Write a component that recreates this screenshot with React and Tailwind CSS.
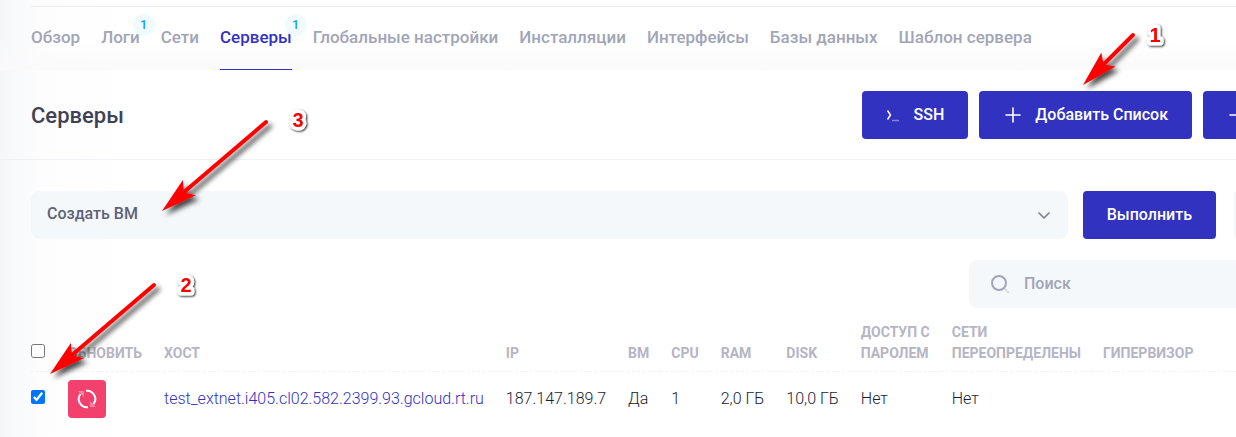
import React, { useState } from 'react';

const tabs = [
  { title: 'Обзор' },
  { title: 'Логи', count: 1 },
  { title: 'Сети' },
  { title: 'Серверы', count: 1, active: true },
  { title: 'Глобальные настройки' },
  { title: 'Инсталляции' },
  { title: 'Интерфейсы' },
  { title: 'Базы данных' },
  { title: 'Шаблон сервера' },
];

const servers = [
  {
    id: 1,
    host: 'test_extnet.i405.cl02.582.2399.93.gcloud.rt.ru',
    ip: '187.147.189.7',
    vm: 'Да',
    cpu: '1',
    ram: '2,0 ГБ',
    disk: '10,0 ГБ',
    password: 'Нет',
    networks: 'Нет',
    hypervisor: '',
  },
];

const marks = [
  { label: '1', x: 1155, y: 42, from: [1133, 35], to: [1083, 85] },
  { label: '2', x: 186, y: 292, from: [154, 285], to: [50, 374] },
  { label: '3', x: 298, y: 127, from: [266, 122], to: [162, 211] },
];

const PlusIcon = () => (
  <svg className="size-5 shrink-0" viewBox="0 0 20 20" stroke="currentColor" strokeWidth="1.6" strokeLinecap="round">
    <path d="M3 10H17M10 3V17" />
  </svg>
);

const Tabs = () => (
  <nav className="flex gap-[21px] border-t border-[#ebedf3] text-[17px]">
    {tabs.map((tab) => (
      <a
        key={tab.title}
        href="#"
        className={
          tab.active
            ? 'relative border-b border-[#3232c0] pt-[18px] pb-5 leading-6 font-medium text-[#3232c0]'
            : 'relative border-b border-transparent pt-[18px] pb-5 leading-6 font-medium text-[#a1a5b7]'
        }
      >
        {tab.title}
        {tab.count && (
          <span className="absolute top-[7px] -right-[15px] size-[22px] rounded-full bg-[#f1faff] text-center text-xs leading-[22px] text-[#009ef7]">
            {tab.count}
          </span>
        )}
      </a>
    ))}
  </nav>
);

const Toolbar = () => (
  <div className="flex items-center border-b border-[#eff2f5] pt-[21px] pb-5 pl-[31px]">
    <h1 className="flex-1 pt-0.5 text-[22px] leading-8 font-medium text-[#3f4254]">Серверы</h1>
    <div className="-mr-[95px] flex shrink-0 gap-[11px]">
      <button className="flex h-12 items-center gap-3 rounded bg-[#3232c0] px-6 font-medium text-white">
        <svg className="size-4" viewBox="0 0 16 16" fill="none" stroke="currentColor" strokeWidth="1.5">
          <path d="M1.5 3.5L4.5 8L1.5 12.5" />
          <path d="M6 13.5H13" opacity="0.4" />
        </svg>
        SSH
      </button>
      <button className="flex h-12 items-center gap-3 rounded bg-[#3232c0] px-6 font-medium text-white">
        <PlusIcon />
        Добавить Список
      </button>
      <button aria-label="Добавить" className="flex h-12 w-32 items-center rounded bg-[#3232c0] px-6 text-white">
        <PlusIcon />
      </button>
    </div>
  </div>
);

const Actions = () => (
  <div className="flex pt-[31px] pl-[31px]">
    <div className="relative flex-1">
      <select
        aria-label="Действие"
        className="h-12 w-full appearance-none rounded-lg bg-[#f5f8fa] px-4 pb-0.5 font-medium text-[#5e6278]"
      >
        <option>Создать ВМ</option>
      </select>
      <svg
        className="pointer-events-none absolute top-4 right-4 size-4"
        viewBox="0 0 16 16"
        fill="none"
        stroke="#7e8299"
        strokeWidth="1.7"
        strokeLinecap="round"
        strokeLinejoin="round"
      >
        <path d="M3 6L8 11L13 6" />
      </svg>
    </div>
    <button className="ml-[15px] h-12 rounded bg-[#3232c0] px-6 font-medium text-white">Выполнить</button>
    <div className="-mr-6 ml-[18px] h-12 w-[26px] rounded bg-[#f5f8fa]" />
  </div>
);

const Search = () => (
  <div className="mt-[21px] flex justify-end">
    <label className="flex h-12 w-[267px] items-center gap-3.5 rounded-l-lg bg-[#f5f8fa] pl-[21px]">
      <svg className="size-5 shrink-0" viewBox="0 0 20 20" fill="none" stroke="#a1a5b7" strokeWidth="2">
        <circle cx="9" cy="9" r="7" />
        <path d="M14 14L19 19" opacity="0.3" />
      </svg>
      <input
        type="text"
        aria-label="Поиск"
        placeholder="Поиск"
        className="w-full min-w-0 bg-transparent font-medium outline-none placeholder:text-[#a1a5b7]"
      />
    </label>
  </div>
);

const ServerTable = () => {
  const [selected, setSelected] = useState([1]);

  const toggle = (id) => {
    setSelected(selected.includes(id) ? selected.filter((item) => item !== id) : [...selected, id]);
  };

  const toggleAll = (e) => {
    setSelected(e.target.checked ? servers.map((server) => server.id) : []);
  };

  return (
    <div className="pt-3.5 pl-[31px]">
      <table className="w-full text-left whitespace-nowrap">
        <thead>
          <tr className="align-bottom text-sm leading-[21px] font-medium text-[#b5b5c3] uppercase [&>th]:border-b [&>th]:border-dashed [&>th]:border-[#eff2f5] [&>th]:pb-[7px]">
            <th className="pr-3">
              <input type="checkbox" aria-label="Выбрать все" className="mb-1.5 block size-[14px]" onChange={toggleAll} />
            </th>
            <th className="px-[11px]">Обновить</th>
            <th className="px-[11px]">Хост</th>
            <th className="px-[11px]">IP</th>
            <th className="px-[11px]">ВМ</th>
            <th className="px-[11px]">CPU</th>
            <th className="px-[11px]">RAM</th>
            <th className="px-[11px]">Disk</th>
            <th className="px-[11px]">Доступ с<br />паролем</th>
            <th className="px-[11px]">Сети<br />переопределены</th>
            <th className="w-full px-[11px]">Гипервизор</th>
          </tr>
        </thead>
        <tbody>
          {servers.map((server) => (
            <tr key={server.id} className="font-light text-[#181c32] [&>td]:py-2">
              <td className="pr-3">
                <input
                  type="checkbox"
                  aria-label={server.host}
                  className="mb-1 block size-[14px]"
                  checked={selected.includes(server.id)}
                  onChange={() => toggle(server.id)}
                />
              </td>
              <td className="px-[11px]">
                <button aria-label="Обновить" className="flex size-[38px] items-center justify-center rounded bg-[#f1416c] text-white">
                  <svg className="size-5" viewBox="0 0 20 20" fill="none" stroke="currentColor" strokeWidth="2">
                    <path d="M9 1.8A8.2 8.2 0 0 1 16.5 15M11 18.2A8.2 8.2 0 0 1 3.5 5" />
                    <path d="M1 2H7V8ZM19 18H13V12Z" fill="currentColor" stroke="none" opacity="0.35" />
                  </svg>
                </button>
              </td>
              <td className="px-[11px]">
                <a href="#" className="text-[#3232c0]">{server.host}</a>
              </td>
              <td className="px-[11px]">{server.ip}</td>
              <td className="px-[11px]">{server.vm}</td>
              <td className="px-[11px]">{server.cpu}</td>
              <td className="px-[11px]">{server.ram}</td>
              <td className="px-[11px]">{server.disk}</td>
              <td className="px-[11px]">{server.password}</td>
              <td className="px-[11px]">{server.networks}</td>
              <td className="px-[11px]">{server.hypervisor}</td>
            </tr>
          ))}
        </tbody>
      </table>
    </div>
  );
};

// numbered arrows over the page
const Annotations = () => (
  <svg className="pointer-events-none absolute top-0 left-0 h-[437px] w-[1236px]" viewBox="0 0 1236 437">
    <defs>
      <filter id="shadow" x="-20%" y="-20%" width="150%" height="150%">
        <feDropShadow dx="4" dy="4" stdDeviation="2.5" floodColor="#000" floodOpacity="0.7" />
      </filter>
      <filter id="label-shadow" x="-80%" y="-50%" width="260%" height="200%">
        <feDropShadow dx="1" dy="1" stdDeviation="1" floodColor="#000" floodOpacity="0.9" />
      </filter>
    </defs>
    {marks.map(({ label, x, y, from, to }) => {
      const dx = from[0] - to[0];
      const dy = from[1] - to[1];
      const length = Math.hypot(dx, dy);
      const angle = (Math.atan2(dy, dx) * 180) / Math.PI;
      return (
        <g key={label}>
          <g filter="url(#shadow)">
            <g transform={`translate(${to[0]} ${to[1]}) rotate(${angle})`} fill="#f00">
              <path d="M0 0L36 -10L29 0L36 10Z" />
              <path d={`M26 0H${length}`} stroke="#f00" strokeWidth="4" strokeLinecap="round" />
            </g>
          </g>
          <text
            x={x}
            y={y}
            textAnchor="middle"
            filter="url(#label-shadow)"
            className="fill-[#f00] stroke-white stroke-[7px] font-['Liberation_Sans',sans-serif] text-xl font-bold [paint-order:stroke] [stroke-linejoin:round]"
          >
            {label}
          </text>
        </g>
      );
    })}
  </svg>
);

const App = () => {
  return (
    <div className="relative min-h-screen overflow-hidden bg-white bg-linear-to-r from-[#f6f7f9] via-[#fdfdfe] via-[40px] to-white to-[130px] font-[Roboto,sans-serif] text-base">
      <header className="bg-linear-to-b from-transparent from-60% to-[#fafafb] pt-1.5 pl-[31px]">
        <Tabs />
      </header>
      <main>
        <Toolbar />
        <Actions />
        <Search />
        <ServerTable />
      </main>
      <Annotations />
    </div>
  );
};

export default App;
